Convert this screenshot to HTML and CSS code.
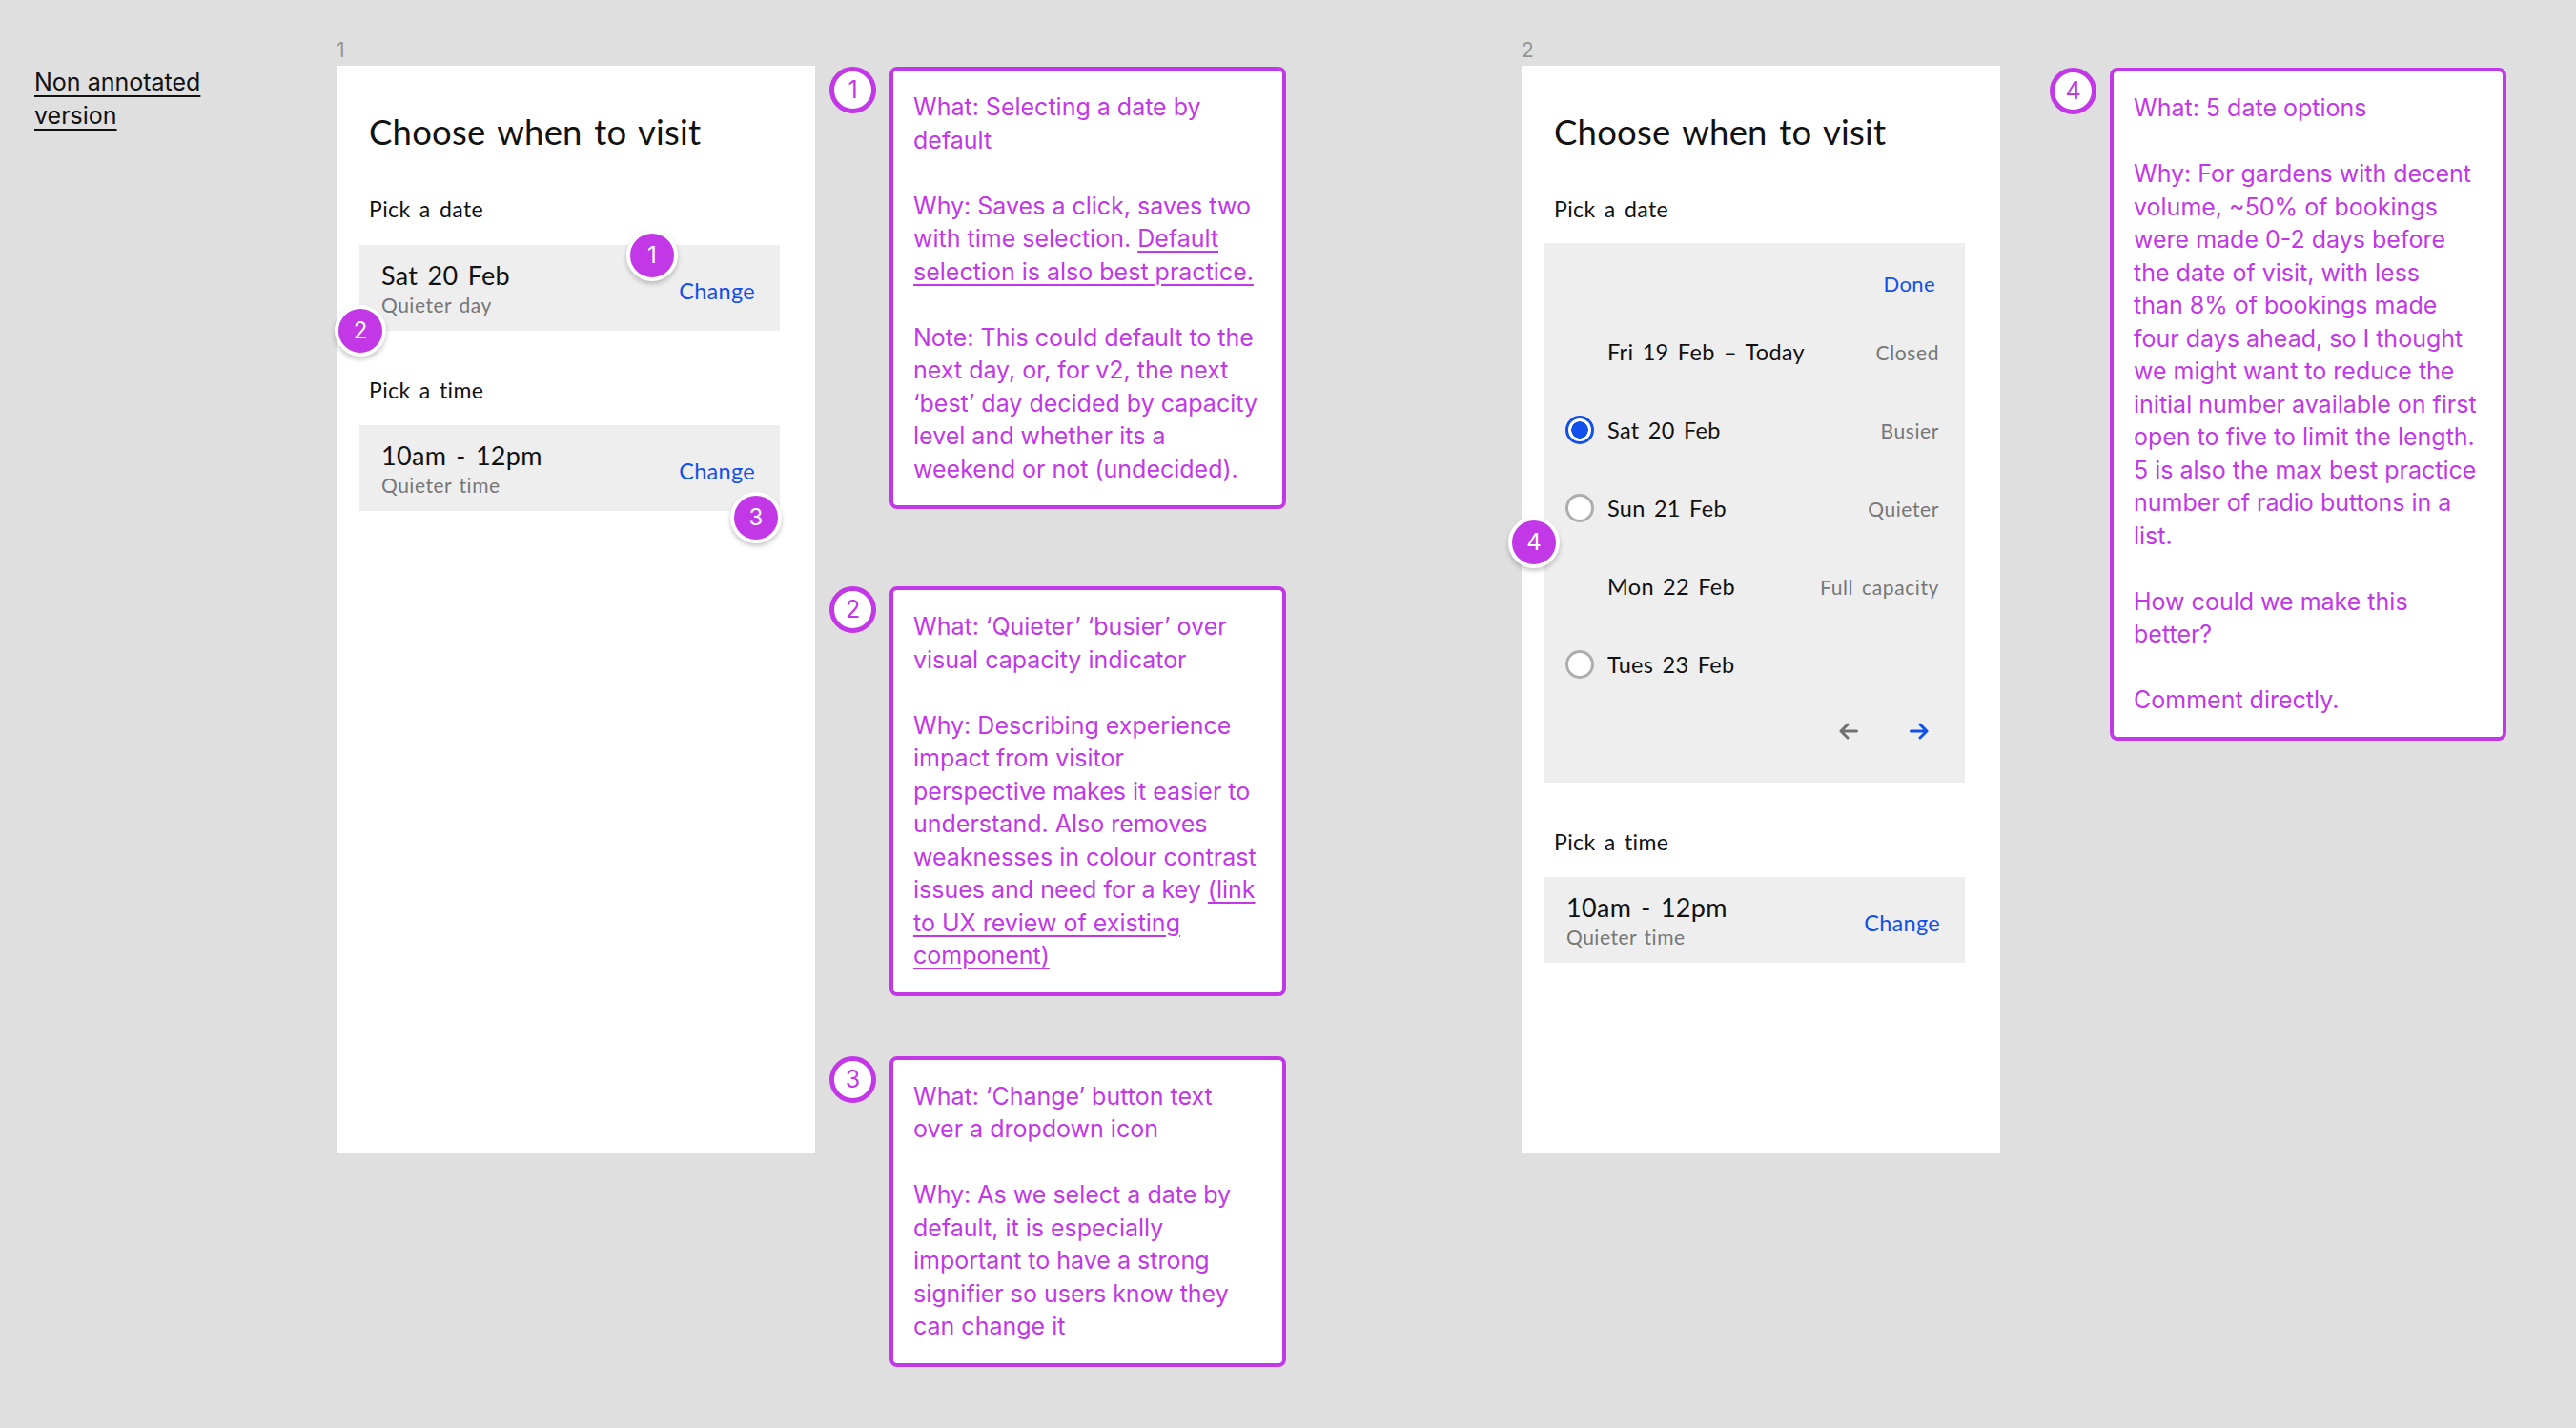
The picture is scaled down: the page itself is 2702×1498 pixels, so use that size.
FILE: index.html
```html
<!DOCTYPE html>
<html lang="en">
<head>
<meta charset="utf-8">
<title>Choose when to visit – annotated</title>
<link rel="stylesheet" href="styles.css">
</head>
<body>
<div class="canvas">
  <div class="note-col">
    <a class="plain-link" href="#">Non annotated<br>version</a>
  </div>

  <div class="frame-col">
    <div class="frame-label">1</div>
    <div class="frame">
      <h1 class="title">Choose when to visit</h1>
      <div class="label">Pick a date</div>
      <div class="field">
        <div class="field-text">
          <div class="field-main">Sat 20 Feb</div>
          <div class="field-sub">Quieter day</div>
        </div>
        <div class="change">Change</div>
      </div>
      <div class="label label-gap">Pick a time</div>
      <div class="field field-time">
        <div class="field-text">
          <div class="field-main">10am - 12pm</div>
          <div class="field-sub">Quieter time</div>
        </div>
        <div class="change">Change</div>
      </div>
      <div class="badge badge-1">1</div>
      <div class="badge badge-2">2</div>
      <div class="badge badge-3">3</div>
    </div>
  </div>

  <div class="annot-col annot-col-1">
    <div class="annot annot-1">
      <div class="num">1</div>
      <div class="annot-box">
        <p>What: Selecting a date by<br>default</p>
        <p>Why: Saves a click, saves two<br>with time selection. <u>Default<br>selection is also best practice.</u></p>
        <p>Note: This could default to the<br>next day, or, for v2, the next<br>‘best’ day decided by capacity<br>level and whether its a<br>weekend or not (undecided).</p>
      </div>
    </div>
    <div class="annot annot-2">
      <div class="num">2</div>
      <div class="annot-box">
        <p>What: ‘Quieter’ ‘busier’ over<br>visual capacity indicator</p>
        <p>Why: Describing experience<br>impact from visitor<br>perspective makes it easier to<br>understand. Also removes<br>weaknesses in colour contrast<br>issues and need for a key <u>(link<br>to UX review of existing<br>component)</u></p>
      </div>
    </div>
    <div class="annot annot-3">
      <div class="num">3</div>
      <div class="annot-box">
        <p>What: ‘Change’ button text<br>over a dropdown icon</p>
        <p>Why: As we select a date by<br>default, it is especially<br>important to have a strong<br>signifier so users know they<br>can change it</p>
      </div>
    </div>
  </div>

  <div class="frame-col frame-col-2">
    <div class="frame-label">2</div>
    <div class="frame">
      <h1 class="title">Choose when to visit</h1>
      <div class="label">Pick a date</div>
      <div class="picker">
        <div class="done-row"><span class="done">Done</span></div>
        <div class="opt">
          <span class="radio-slot"></span>
          <span class="opt-date">Fri 19 Feb – Today</span>
          <span class="opt-cap">Closed</span>
        </div>
        <div class="opt">
          <span class="radio-slot"><span class="radio radio-on"></span></span>
          <span class="opt-date">Sat 20 Feb</span>
          <span class="opt-cap">Busier</span>
        </div>
        <div class="opt">
          <span class="radio-slot"><span class="radio"></span></span>
          <span class="opt-date">Sun 21 Feb</span>
          <span class="opt-cap">Quieter</span>
        </div>
        <div class="opt">
          <span class="radio-slot"></span>
          <span class="opt-date">Mon 22 Feb</span>
          <span class="opt-cap">Full capacity</span>
        </div>
        <div class="opt">
          <span class="radio-slot"><span class="radio"></span></span>
          <span class="opt-date">Tues 23 Feb</span>
          <span class="opt-cap"></span>
        </div>
        <div class="arrows">
          <svg class="arrow" width="20" height="20" viewBox="0 0 20 20"><path d="M18.5 10H2M9 3L2 10l7 7" fill="none" stroke="#707070" stroke-width="3" stroke-linecap="round" stroke-linejoin="round"/></svg>
          <svg class="arrow" width="20" height="20" viewBox="0 0 20 20"><path d="M1.5 10H18M11 3l7 7-7 7" fill="none" stroke="#1150ea" stroke-width="3" stroke-linecap="round" stroke-linejoin="round"/></svg>
        </div>
      </div>
      <div class="label label-gap">Pick a time</div>
      <div class="field field-time">
        <div class="field-text">
          <div class="field-main">10am - 12pm</div>
          <div class="field-sub">Quieter time</div>
        </div>
        <div class="change">Change</div>
      </div>
      <div class="badge badge-4">4</div>
    </div>
  </div>

  <div class="annot-col annot-col-2">
    <div class="annot annot-4">
      <div class="num">4</div>
      <div class="annot-box">
        <p>What: 5 date options</p>
        <p>Why: For gardens with decent<br>volume, ~50% of bookings<br>were made 0-2 days before<br>the date of visit, with less<br>than 8% of bookings made<br>four days ahead, so I thought<br>we might want to reduce the<br>initial number available on first<br>open to five to limit the length.<br>5 is also the max best practice<br>number of radio buttons in a<br>list.</p>
        <p>How could we make this<br>better?</p>
        <p>Comment directly.</p>
      </div>
    </div>
  </div>
</div>
</body>
</html>
```

FILE: styles.css
```css
* { box-sizing: border-box; }

html, body {
  margin: 0;
  padding: 0;
  background: #dfdfdf;
}

body {
  width: 2702px;
  height: 1498px;
  overflow: hidden;
  font-family: Inter, "Noto Sans", sans-serif;
}

.canvas {
  display: flex;
  align-items: flex-start;
}

/* left note */
.note-col {
  width: 353px;
  padding: 69px 0 0 36px;
}

.plain-link {
  display: inline-block;
  font-family: Inter, sans-serif;
  font-size: 25px;
  line-height: 34.5px;
  color: #111;
  text-decoration: underline;
  text-decoration-thickness: 2px;
  text-underline-offset: 5px;
}

/* frames */
.frame-col {
  width: 502px;
  flex: none;
}

.frame-col-2 {
  margin-left: 247px;
}

.frame-label {
  margin-top: 41px;
  height: 28px;
  line-height: 24px;
  font-size: 21px;
  color: #959595;
  font-family: Inter, sans-serif;
}

.frame {
  position: relative;
  display: flow-root;
  height: 1140px;
  background: #fff;
  padding: 0 37px 0 24px;
  font-family: Lato, "Noto Sans", sans-serif;
  color: #111;
  box-shadow: 0 1px 0 #e9e9e9;
}

.title {
  margin: 44px 0 0;
  padding-left: 10px;
  font-size: 36.5px;
  line-height: 50px;
  font-weight: 400;
  letter-spacing: 0.2px;
  word-spacing: 3px;
}

.label {
  margin-top: 41px;
  padding-left: 10px;
  font-size: 23px;
  line-height: 30px;
  letter-spacing: 0.4px;
  word-spacing: 3px;
}

.label-gap {
  margin-top: 47px;
}

.field {
  display: flex;
  align-items: center;
  justify-content: space-between;
  margin-top: 23px;
  height: 90px;
  padding: 0 26px 0 23px;
  background: #eeeeee;
}

.field-time {
  margin-top: 22px;
}

.field-text {
  padding-top: 4px;
}

.field-main {
  font-size: 27px;
  line-height: 32px;
  letter-spacing: 0.3px;
  word-spacing: 3px;
}

.field-sub {
  font-size: 21px;
  line-height: 30px;
  color: #777;
  letter-spacing: 0.5px;
  word-spacing: 2px;
}

.change {
  padding-top: 5px;
  font-size: 23.5px;
  color: #1150ea;
  letter-spacing: 0.3px;
}

/* picker */
.picker {
  margin-top: 21px;
  height: 566px;
  background: #eeeeee;
  padding: 28px 0 0 0;
}

.done-row {
  display: flex;
  justify-content: flex-end;
  padding-right: 31px;
  line-height: 30px;
}

.done {
  font-size: 22px;
  color: #1150ea;
  letter-spacing: 0.4px;
}

.opt {
  display: flex;
  align-items: center;
  height: 82px;
  padding: 0 27px 0 22px;
}

.done-row + .opt {
  margin-top: 15px;
}

.radio-slot {
  width: 30px;
  height: 30px;
  flex: none;
  margin-right: 14px;
  display: flex;
  align-items: center;
  justify-content: center;
}

.radio {
  width: 30px;
  height: 30px;
  border-radius: 50%;
  border: 3px solid #adadad;
  background: #fff;
}

.radio-on {
  border-color: #1150ea;
  background: radial-gradient(circle, #1150ea 0 8.5px, #fff 9px);
}

.opt-date {
  flex: 1;
  font-size: 23.5px;
  letter-spacing: 0.3px;
  word-spacing: 3px;
}

.opt-cap {
  font-size: 21px;
  color: #777;
  letter-spacing: 0.6px;
  word-spacing: 3px;
}

.arrows {
  display: flex;
  justify-content: flex-end;
  gap: 54px;
  margin-top: 19px;
  padding-right: 38px;
}

.arrow { display: block; }

/* badges over frames */
.badge {
  position: absolute;
  width: 54px;
  height: 54px;
  border-radius: 50%;
  background: #c238e6;
  border: 4px solid #fff;
  box-shadow: 0 3px 5px rgba(0, 0, 0, 0.22);
  color: #fff;
  font-family: Inter, sans-serif;
  font-size: 24px;
  line-height: 46px;
  text-align: center;
}

.badge-1 { left: 304px; top: 172px; }
.badge-2 { left: -2px; top: 251px; }
.badge-3 { left: 413px; top: 447px; }
.badge-4 { left: -14px; top: 473px; }

/* annotations */
.annot-col {
  width: 479px;
  flex: none;
  margin-left: 15px;
}

.annot-col-2 {
  margin-left: 52px;
}

.annot {
  display: flex;
  align-items: flex-start;
  gap: 14px;
}

.annot-1 { margin-top: 70px; }
.annot-2 { margin-top: 81px; }
.annot-3 { margin-top: 63px; }
.annot-4 { margin-top: 71px; }

.num {
  width: 49px;
  height: 49px;
  flex: none;
  border-radius: 50%;
  border: 5px solid #c238e6;
  background: #fff;
  color: #c238e6;
  font-size: 25px;
  line-height: 39px;
  text-align: center;
}

.annot-box {
  width: 416px;
  flex: none;
  background: #fff;
  border: 4px solid #c238e6;
  border-radius: 8px;
  padding: 21px;
  color: #c238e6;
  font-size: 25px;
  line-height: 34.5px;
  white-space: nowrap;
}

.annot-box p {
  margin: 0;
}

.annot-box p + p {
  margin-top: 34.5px;
}

.annot-box u {
  text-decoration-thickness: 2px;
  text-underline-offset: 4px;
}
```
